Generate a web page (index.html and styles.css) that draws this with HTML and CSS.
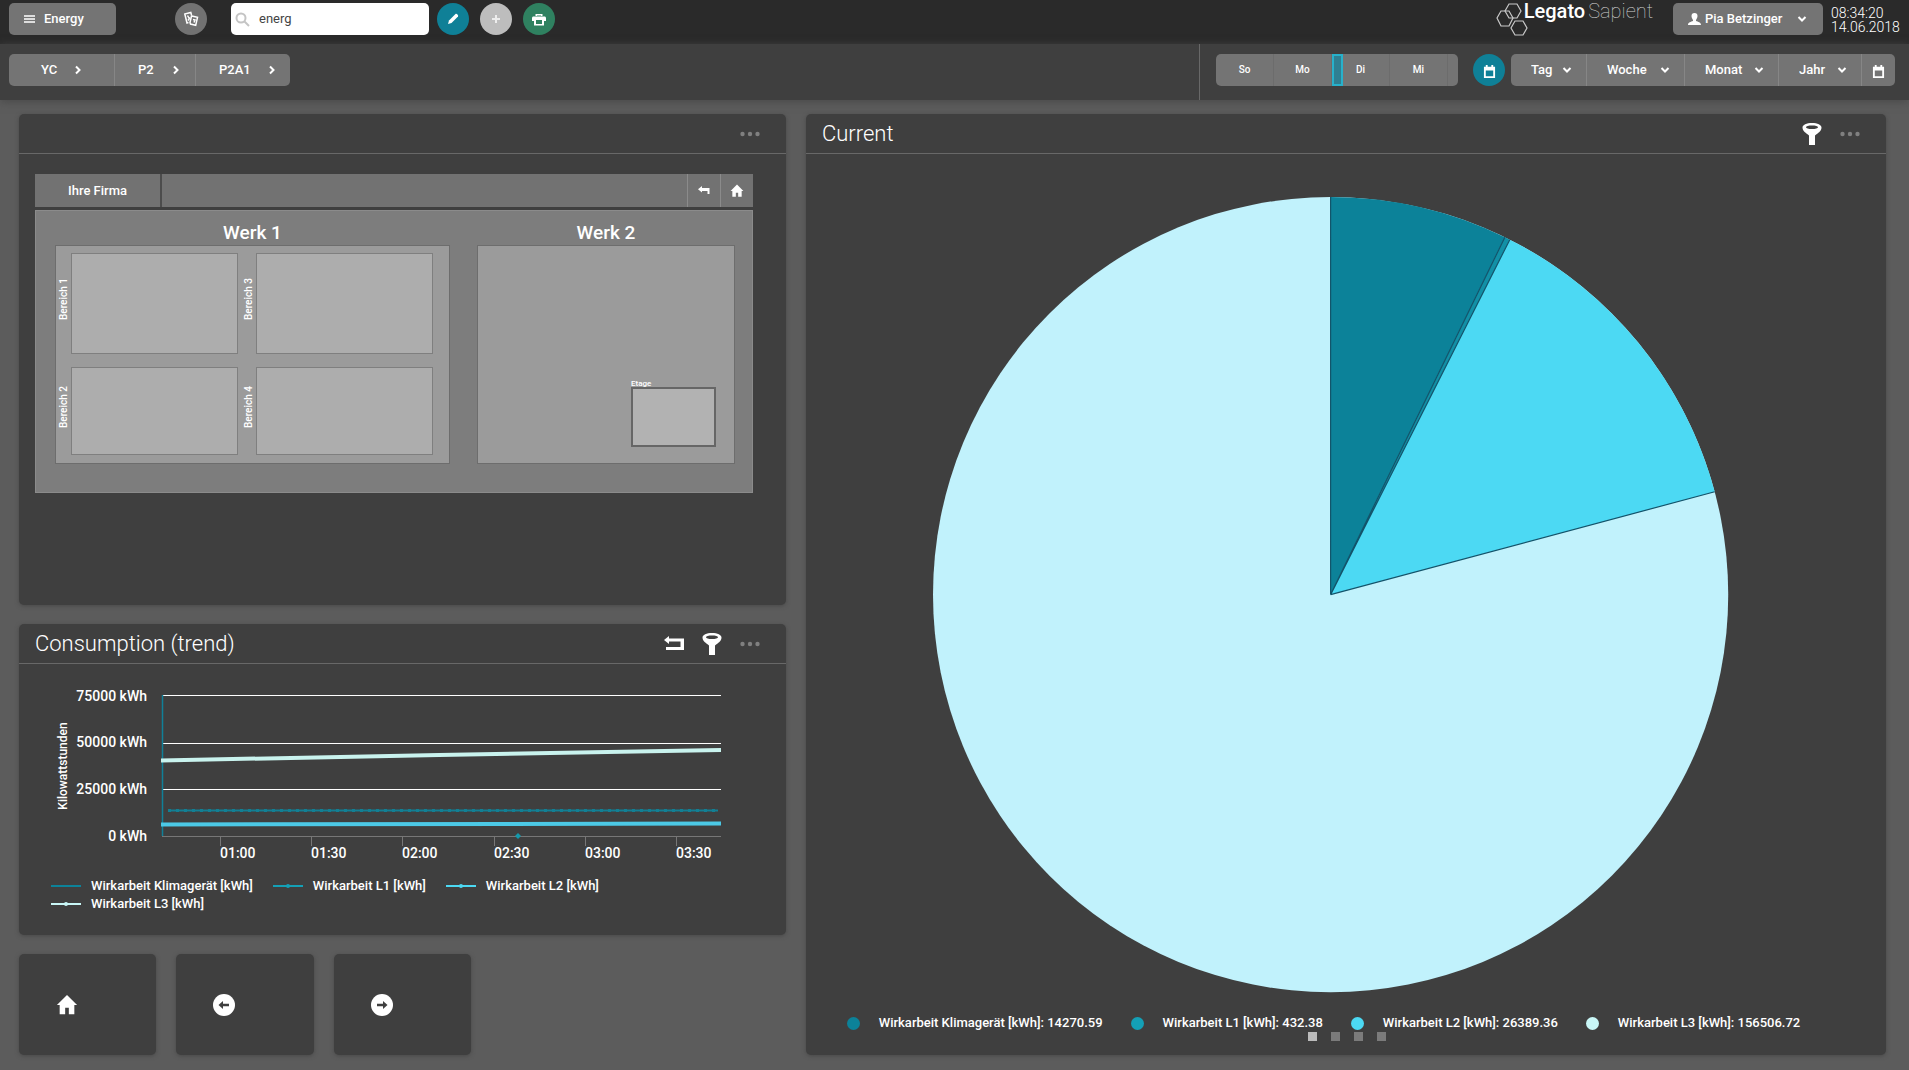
FILE: index.html
```html
<!DOCTYPE html>
<html lang="en">
<head>
<meta charset="utf-8">
<meta name="viewport" content="width=device-width, initial-scale=1">
<title>Legato Sapient – Energy</title>
<link rel="stylesheet" href="styles.css">
</head>
<body>
<svg class="sprite" aria-hidden="true">
  <symbol id="chev-down" viewBox="0 0 12 12"><path d="M2.500 4l3.500 3.500L9.500 4" fill="none" stroke="currentColor" stroke-width="2"/></symbol>
  <symbol id="chev-right" viewBox="0 0 12 12"><path d="M4 2.500L7.500 6 4 9.500" fill="none" stroke="currentColor" stroke-width="2"/></symbol>
  <symbol id="home" viewBox="0 0 24 24"><path d="M12 1L1 12h3v10h6v-7h4v7h6V12h3z" fill="currentColor"/></symbol>
  <symbol id="calendar" viewBox="0 0 14 14"><path d="M1 2h2V0h2v2h4V0h2v2h2v12H1zM3 6v6h8V6z" fill="currentColor" fill-rule="evenodd"/></symbol>
  <symbol id="filter" viewBox="0 0 20 22"><path d="M10 0c5.500 0 9.500 1.800 9.500 4.500 0 3.500-3.500 5.500-6.500 8V22H7v-9.500C4 10 .5 8 .5 4.500.5 1.800 4.500 0 10 0zm0 2.500C6.500 2.500 4 3.200 4 4.200S6.500 6 10 6s6-.8 6-1.800-2.500-1.700-6-1.700z" fill="currentColor" fill-rule="evenodd"/></symbol>
  <symbol id="dots" viewBox="0 0 20 6"><g fill="currentColor"><circle cx="2.500" cy="3" r="2.200"/><circle cx="10" cy="3" r="2.200"/><circle cx="17.500" cy="3" r="2.200"/></g></symbol>
</svg>

<header class="topbar">
  <button class="btn menu-btn" type="button">
    <svg width="11" height="8" viewBox="0 0 11 8" aria-hidden="true"><path d="M0 1h11M0 4h11M0 7h11" stroke="#fff" stroke-width="1.500"/></svg>
    Energy
  </button>
  <button class="round grey" type="button" aria-label="Pages">
    <svg width="16" height="16" viewBox="0 0 16 16" fill="none" stroke="#fff" stroke-width="1.500"><path d="M5.500 11.500L4 12 1.800 3l6-1.500.7 2.500"/><path d="M7 11.500L8.500 5l6 1.300-1.800 8L7.500 13z"/><path d="M4.500 4.500l2 3.500M5 9.500l2-3M10 8.500l2 .5-1 2.500"/></svg>
  </button>
  <label class="search">
    <svg width="15" height="15" viewBox="0 0 15 15" fill="none" stroke="#c4c4c4" stroke-width="2" aria-hidden="true"><circle cx="6" cy="6" r="4.500"/><path d="M9.500 9.500L14 14"/></svg>
    <input type="text" value="energ" aria-label="Search">
  </label>
  <div class="tools">
    <button class="round teal" type="button" aria-label="Edit"><svg width="14" height="14" viewBox="0 0 14 14"><path d="M2 12l1-3.500 6.500-6.500c1-.8 3.200 1 2.500 2.500L5.500 11z" fill="#fff"/></svg></button>
    <button class="round light" type="button" aria-label="Add"><svg width="12" height="12" viewBox="0 0 12 12"><path d="M6 2v8M2 6h8" stroke="#ededed" stroke-width="2"/></svg></button>
    <button class="round green" type="button" aria-label="Print"><svg width="14" height="13" viewBox="0 0 14 13" fill="#fff"><path d="M3.500 3V1h7v2h-1.500V2.400h-4V3z"/><path d="M1.500 3.500h11c.8 0 1.500.7 1.500 1.500v3h-2v4.500H2V8H0V5c0-.8.7-1.500 1.500-1.500zM4 7v4h6V7z" fill-rule="evenodd"/></svg></button>
  </div>
  <div class="logo">
    <svg width="32" height="34" viewBox="0 0 32 34" fill="none" stroke="#c9c9c9" stroke-width="1.200" aria-hidden="true"><path d="M13 1h8l4 7-4 7h-8l-4-7z"/><path d="M5 8h8l4 7-4 8H5l-4-8z"/><path d="M19 18h8l4 7-4 7h-8l-4-7z"/></svg>
    <span class="logo-strong">Legato</span><span class="logo-thin">Sapient</span>
  </div>
  <button class="btn user-btn" type="button">
    <svg width="13" height="12" viewBox="0 0 13 12" aria-hidden="true"><path d="M6.500 0C8.500 0 9.500 1.300 9.500 3S8.500 6.200 8 7v1c2 .8 5 1.300 5 4H0c0-2.700 3-3.200 5-4V7c-.5-.8-1.500-2.300-1.500-4s1-3 3-3z" fill="#fff"/></svg>
    Pia Betzinger
    <svg class="chev" width="12" height="12"><use href="#chev-down"/></svg>
  </button>
  <div class="clock"><time>08:34:20</time><time>14.06.2018</time></div>
</header>

<div class="navbar">
  <nav class="crumbs" aria-label="Path">
    <button class="yc" type="button">YC<svg width="12" height="12"><use href="#chev-right"/></svg></button>
    <button class="p2" type="button">P2<svg width="12" height="12"><use href="#chev-right"/></svg></button>
    <button class="p2a1" type="button">P2A1<svg width="12" height="12"><use href="#chev-right"/></svg></button>
  </nav>
  <div class="timebar">
    <div class="days">
      <button type="button">So</button><button type="button">Mo</button><button type="button">Di</button><button type="button">Mi</button>
      <span class="day-marker"></span>
    </div>
    <button class="round teal now" type="button" aria-label="Today"><svg width="13" height="13"><use href="#calendar"/></svg></button>
    <div class="ranges">
      <div class="range tag"><select aria-label="Day"><option>Tag</option></select><svg width="12" height="12"><use href="#chev-down"/></svg></div>
      <div class="range woche"><select aria-label="Week"><option>Woche</option></select><svg width="12" height="12"><use href="#chev-down"/></svg></div>
      <div class="range monat"><select aria-label="Month"><option>Monat</option></select><svg width="12" height="12"><use href="#chev-down"/></svg></div>
      <div class="range jahr"><select aria-label="Year"><option>Jahr</option></select><svg width="12" height="12"><use href="#chev-down"/></svg></div>
      <button class="pick" type="button" aria-label="Choose dates"><svg width="13" height="13"><use href="#calendar"/></svg></button>
    </div>
  </div>
</div>

<main class="board">
  <div class="left">
    <section class="panel map-panel">
      <div class="panel-head">
        <div class="actions"><button class="more" type="button" aria-label="More"><svg width="20" height="6"><use href="#dots"/></svg></button></div>
      </div>
      <div class="map">
        <div class="map-bar">
          <button class="firm" type="button">Ihre Firma</button>
          <button class="map-tool" type="button" aria-label="Back"><svg width="12" height="10" viewBox="0 0 12 10"><path d="M4 0v2h7.500v6h-2V5H4v1.500L0 3.300z" fill="#fff"/></svg></button>
          <button class="map-tool" type="button" aria-label="Home"><svg width="14" height="14"><use href="#home"/></svg></button>
        </div>
        <div class="plan">
          <div class="werk">
            <h3>Werk 1</h3>
            <div class="site areas">
              <span class="side">Bereich 1</span><div class="area"></div>
              <span class="side">Bereich 3</span><div class="area"></div>
              <span class="side">Bereich 2</span><div class="area"></div>
              <span class="side">Bereich 4</span><div class="area"></div>
            </div>
          </div>
          <div class="werk">
            <h3>Werk 2</h3>
            <div class="site floor">
              <div class="etage"><span>Etage</span><div class="etage-box"></div></div>
            </div>
          </div>
        </div>
      </div>
    </section>

    <section class="panel trend-panel">
      <div class="panel-head">
        <h2>Consumption (trend)</h2>
        <div class="actions">
          <button type="button" aria-label="Back"><svg width="20" height="16" viewBox="0 0 20 16"><path d="M5 0v2.500h15V14H2v-3h14.500V5.500H5V8L0 4z" fill="#fff"/></svg></button>
          <button type="button" aria-label="Filter"><svg width="20" height="22"><use href="#filter"/></svg></button>
          <button class="more" type="button" aria-label="More"><svg width="20" height="6"><use href="#dots"/></svg></button>
        </div>
      </div>
      <svg class="trend" viewBox="0 0 767 212" role="img" aria-label="Consumption trend">
        <g stroke="#fff"><path d="M143 31.500h559M143 79.500h559M143 125.500h559"/></g>
        <path d="M143 172.500h559M201.500 172v10M292.500 172v10M383.500 172v10M475.500 172v10M566.500 172v10M657.500 172v10" stroke="#777"/>
        <path d="M143.500 31v141" stroke="#108098" stroke-width="1.500"/>
        <path d="M149 146.500h550" stroke="#127f93" stroke-width="2"/>
        <path d="M149 146.500h550" stroke="#127f93" stroke-width="3" stroke-dasharray="3 5"/>
        <path d="M142 160.500L702 159.500" stroke="#4cc9e6" stroke-width="4"/>
        <path d="M142 96.500L420 91 702 86" stroke="#c9f3ee" stroke-width="4" fill="none"/>
        <path d="M496 172l3-3 3 3-3 3z" fill="#1499ab"/>
        <g class="y-labels"><text x="128" y="37">75000 kWh</text><text x="128" y="83">50000 kWh</text><text x="128" y="130">25000 kWh</text><text x="128" y="177">0 kWh</text></g>
        <g class="x-labels"><text x="201" y="194">01:00</text><text x="292" y="194">01:30</text><text x="383" y="194">02:00</text><text x="475" y="194">02:30</text><text x="566" y="194">03:00</text><text x="657" y="194">03:30</text></g>
        <text class="y-title" transform="translate(48 102) rotate(-90)">Kilowattstunden</text>
      </svg>
      <ul class="trend-legend">
        <li class="c1"><i></i>Wirkarbeit Klimagerät [kWh]</li>
        <li class="c2"><i class="dot"></i>Wirkarbeit L1 [kWh]</li>
        <li class="c3"><i class="dot"></i>Wirkarbeit L2 [kWh]</li>
        <li class="c4"><i class="dot"></i>Wirkarbeit L3 [kWh]</li>
      </ul>
    </section>

    <div class="tiles">
      <button class="tile" type="button" aria-label="Home"><svg width="22" height="22"><use href="#home"/></svg></button>
      <button class="tile" type="button" aria-label="Previous"><svg width="22" height="22" viewBox="0 0 22 22"><circle cx="11" cy="11" r="11" fill="#fff"/><path d="M5.500 11L10 7v2.800h6v2.400h-6V15z" fill="#3f3f3f"/></svg></button>
      <button class="tile" type="button" aria-label="Next"><svg width="22" height="22" viewBox="0 0 22 22"><circle cx="11" cy="11" r="11" fill="#fff"/><path d="M16.500 11L12 7v2.800H6v2.400h6V15z" fill="#3f3f3f"/></svg></button>
    </div>
  </div>

  <section class="panel pie-panel">
    <div class="panel-head">
      <h2>Current</h2>
      <div class="actions">
        <button type="button" aria-label="Filter"><svg width="20" height="22"><use href="#filter"/></svg></button>
        <button class="more" type="button" aria-label="More"><svg width="20" height="6"><use href="#dots"/></svg></button>
      </div>
    </div>
    <div class="pie-body">
      <svg class="pie" viewBox="-398 -398 796 796" role="img" aria-label="Current share per meter">
        <circle r="397" fill="#c1f2fc"/>
        <path d="M0 0V-397A397 397 0 0 1 174 -356.800z" fill="#0c8299"/>
        <path d="M0 0L174 -356.800A397 397 0 0 1 178.900 -354.400z" fill="#1290a6"/>
        <path d="M0 0L178.900 -354.400A397 397 0 0 1 383.500 -102.700z" fill="#4cd9f3"/>
        <path d="M0 -397V0L174 -356.800M0 0L178.900 -354.400M0 0L383.500 -102.700" fill="none" stroke="#12536a" stroke-width="1.200"/>
      </svg>
      <ul class="pie-legend">
        <li class="c1"><i></i>Wirkarbeit Klimagerät [kWh]: 14270.59</li>
        <li class="c2"><i></i>Wirkarbeit L1 [kWh]: 432.38</li>
        <li class="c3"><i></i>Wirkarbeit L2 [kWh]: 26389.36</li>
        <li class="c4"><i></i>Wirkarbeit L3 [kWh]: 156506.72</li>
      </ul>
      <div class="pager"><button class="on" type="button" aria-label="Page 1"></button><button type="button" aria-label="Page 2"></button><button type="button" aria-label="Page 3"></button><button type="button" aria-label="Page 4"></button></div>
    </div>
  </section>
</main>
</body>
</html>
```

FILE: styles.css
```css
* { box-sizing: border-box; }
body {
  margin: 0;
  min-height: 100vh;
  display: flex;
  flex-direction: column;
  background: #5c5c5c;
  color: #fff;
  font: 500 13px/16px Roboto, sans-serif;
}
button, select, input { font: inherit; color: inherit; border: 0; margin: 0; padding: 0; background: none; }
button { display: flex; align-items: center; justify-content: center; }
ul { list-style: none; margin: 0; padding: 0; }
h2, h3 { margin: 0; }
svg { flex: none; }
.sprite { position: absolute; width: 0; height: 0; }

/* top bar */
.topbar {
  display: flex;
  align-items: flex-start;
  height: 44px;
  padding: 3px 12px 0 9px;
  background: #2a2a2a;
}
.btn { height: 32px; border-radius: 5px; background: #747474; }
.menu-btn { width: 107px; justify-content: flex-start; padding-left: 15px; gap: 9px; }
.round { width: 32px; height: 32px; border-radius: 50%; flex: none; }
.grey { background: #727272; margin-left: 59px; }
.teal { background: #0f8097; }
.light { background: #bdbdbd; }
.green { background: #2f8160; }
.search {
  display: flex;
  align-items: center;
  gap: 9px;
  width: 198px;
  height: 32px;
  margin-left: 24px;
  padding-left: 4px;
  border-radius: 5px;
  background: #fff;
}
.search input { flex: 1; min-width: 0; color: #444; font-weight: 400; outline: 0; }
.tools { display: flex; gap: 11px; margin-left: 8px; }
.logo { display: flex; margin-left: auto; margin-right: 20px; line-height: 16px; font-size: 20px; }
.logo-strong { font-weight: 500; margin-left: -4px; }
.logo-thin { font-weight: 100; margin-left: 3px; color: #d0d0d0; }
.user-btn { width: 150px; justify-content: flex-start; padding-left: 15px; gap: 4px; }
.user-btn .chev { margin-left: 10px; }
.clock { display: flex; flex-direction: column; width: 66px; margin-left: 8px; padding-top: 3px; font-size: 14px; font-weight: 300; line-height: 14px; }

/* navigation bar */
.navbar {
  display: flex;
  justify-content: space-between;
  height: 56px;
  padding: 0 14px 0 9px;
  background: #3f3f3f;
  box-shadow: 0 2px 8px #4a4a4a;
}
.crumbs, .ranges, .days { display: flex; height: 32px; border-radius: 5px; background: #747474; overflow: hidden; }
.crumbs { margin-top: 10px; }
.crumbs button { justify-content: space-between; border-right: 1px solid #868686; }
.crumbs .yc { width: 106px; padding: 0 30px 0 32px; }
.crumbs .p2 { width: 81px; padding: 0 13px 0 23px; }
.crumbs .p2a1 { width: 94px; padding: 0 12px 0 23px; border: 0; }
.timebar { display: flex; padding-top: 10px; border-left: 1px solid #686868; }
.days { position: relative; width: 242px; margin-left: 16px; padding-right: 10px; font-size: 10px; }
.days button { flex: 1; border-right: 1px solid #6c6c6c; }
.day-marker { position: absolute; left: 48%; top: 0; width: 11px; height: 32px; border: 2px solid #27b1cb; background: #2f7f92; }
.now { margin: 0 6px 0 15px; padding-top: 2px; }
.range { position: relative; border-right: 1px solid #868686; }
.range select { width: 100%; height: 100%; padding-left: 20px; appearance: none; }
.range svg { position: absolute; right: 13px; top: 10px; pointer-events: none; }
.tag { width: 76px; }
.woche { width: 98px; }
.monat { width: 94px; }
.jahr { width: 83px; }
.pick { width: 33px; padding-top: 2px; }

/* dashboard */
.board {
  flex: 1;
  display: grid;
  grid-template-columns: 767fr 1080fr;
  gap: 20px;
  padding: 14px 23px 15px 19px;
}
.left { display: flex; flex-direction: column; gap: 19px; min-width: 0; }
.panel, .tile { border-radius: 5px; background: #3f3f3f; box-shadow: 0 1px 4px #484848; }
.panel { min-width: 0; }
.panel-head {
  display: flex;
  align-items: center;
  justify-content: space-between;
  height: 40px;
  padding: 0 26px 0 16px;
  border-bottom: 1px solid #686868;
}
.panel-head h2 { font-size: 22px; line-height: 30px; font-weight: 300; }
.actions { display: flex; align-items: center; gap: 18px; margin-left: auto; }
.more { color: #808080; }
.map-panel { flex: 1; }
.map { margin: 20px 33px 0 16px; }
.map-bar { display: flex; height: 33px; background: #727272; }
.firm { width: 127px; border-right: 2px solid #4c4c4c; margin-right: auto; }
.map-tool { width: 33px; border-left: 1px solid #8b8b8b; }
.plan {
  display: grid;
  grid-template-columns: 395fr 258fr;
  gap: 27px;
  margin-top: 3px;
  padding: 0 17px 28px 19px;
  border: 1px solid #8b8b8b;
  background: #7d7d7d;
}
.werk h3 { padding: 12px 0 2px; font-size: 19px; line-height: 20px; font-weight: 500; text-align: center; }
.site { height: 219px; border: 1px solid #6d6d6d; background: #9b9b9b; }
.areas {
  display: grid;
  grid-template-columns: 15px 167fr 18px 177fr;
  grid-template-rows: 101fr 88fr;
  row-gap: 13px;
  padding: 7px 16px 8px 0;
}
.area { border: 1px solid #7f7f7f; background: #adadad; }
.side { justify-self: end; margin-bottom: 8px; writing-mode: vertical-rl; transform: rotate(180deg); font-size: 10px; line-height: 14px; text-align: center; }
.floor { display: flex; justify-content: flex-end; align-items: flex-end; padding: 0 18px 16px 0; }
.etage { width: 85px; font-size: 8px; line-height: 6px; }
.etage span { display: block; }
.etage-box { height: 60px; border: 2px solid #666; background: #b2b2b2; }

/* trend */
.trend-panel { height: 311px; }
.trend { display: block; width: 100%; height: auto; }
.trend text { fill: #fff; font-size: 14px; }
.trend .y-labels { text-anchor: end; }
.trend .y-title { text-anchor: middle; font-size: 12px; }
.trend-legend { display: flex; flex-wrap: wrap; column-gap: 20px; padding: 1px 140px 0 32px; line-height: 18px; }
.trend-legend li, .pie-legend li { display: flex; align-items: center; }
.trend-legend i { display: flex; align-items: center; justify-content: center; width: 30px; height: 2px; margin-right: 10px; background: var(--c); }
.trend-legend .dot::after { content: ""; width: 4px; height: 4px; border-radius: 2px; background: var(--c); }
.c1 { --c: #0c8299; }
.c2 { --c: #14a0b6; }
.c3 { --c: #4cd9f3; }
.c4 { --c: #c9f7f7; }

.tiles { display: grid; grid-template-columns: repeat(5, 1fr); gap: 20px; }
.tile { height: 101px; justify-content: flex-start; padding-left: 37px; }

/* pie */
.pie-panel { display: flex; flex-direction: column; }
.pie-panel .panel-head { flex: none; }
.pie-body { flex: 1; display: flex; flex-direction: column; align-items: center; padding: 42px 31px 0 0; }
.pie { display: block; width: 76%; height: auto; }
.pie-legend { display: flex; gap: 28px; margin: 21px 14px 0 0; line-height: 18px; white-space: nowrap; }
.pie-legend i { width: 13px; height: 13px; margin-right: 19px; border-radius: 50%; background: var(--c); }
.pager { display: flex; gap: 14px; margin-left: 32px; }
.pager button { width: 9px; height: 9px; background: #7b7b7b; }
.pager .on { background: #bcbcbc; }
```
